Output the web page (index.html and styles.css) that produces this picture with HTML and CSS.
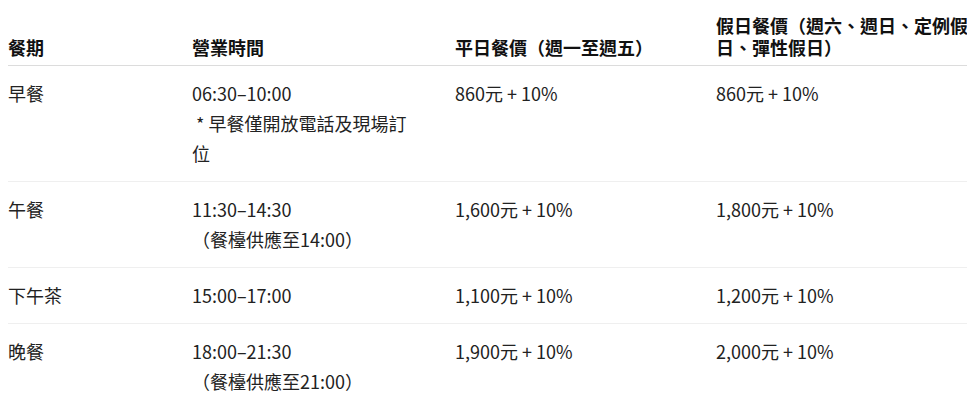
FILE: index.html
```html
<!DOCTYPE html>
<html lang="zh-Hant">
<head>
<meta charset="utf-8">
<title>餐期與價格</title>
<link rel="stylesheet" href="styles.css">
</head>
<body>
<table class="price-table">
  <colgroup>
    <col class="col-meal">
    <col class="col-hours">
    <col class="col-weekday">
    <col class="col-holiday">
  </colgroup>
  <thead>
    <tr>
      <th>餐期</th>
      <th>營業時間</th>
      <th>平日餐價（週一至週五）</th>
      <th class="nowrap">假日餐價（週六、週日、定例假<br>日、彈性假日）</th>
    </tr>
  </thead>
  <tbody>
    <tr>
      <td>早餐</td>
      <td>06:30–10:00<br><span class="note">&nbsp;* 早餐僅開放電話及現場訂<br>位</span></td>
      <td>860元 + 10%</td>
      <td>860元 + 10%</td>
    </tr>
    <tr>
      <td>午餐</td>
      <td>11:30–14:30<br>（餐檯供應至14:00）</td>
      <td>1,600元 + 10%</td>
      <td>1,800元 + 10%</td>
    </tr>
    <tr>
      <td>下午茶</td>
      <td>15:00–17:00</td>
      <td>1,100元 + 10%</td>
      <td>1,200元 + 10%</td>
    </tr>
    <tr>
      <td>晚餐</td>
      <td>18:00–21:30<br>（餐檯供應至21:00）</td>
      <td>1,900元 + 10%</td>
      <td>2,000元 + 10%</td>
    </tr>
  </tbody>
</table>
</body>
</html>
```
FILE: styles.css
```css
html, body {
  background: #ffffff;
}
body {
  margin: 8px;
  font-family: "Noto Sans CJK TC", "Noto Sans", sans-serif;
  font-size: 18px;
  color: #222222;
}
.price-table {
  width: 960px;
  table-layout: fixed;
  border-collapse: collapse;
  border-spacing: 0;
}
.col-meal { width: 184px; }
.col-hours { width: 263px; }
.col-weekday { width: 261px; }
.col-holiday { width: 252px; }

.price-table th {
  text-align: left;
  vertical-align: bottom;
  font-weight: 700;
  color: #111111;
  line-height: 22px;
  padding: 6px 0 7px;
  border-bottom: 1px solid #dcdcdc;
}
.price-table th.nowrap {
  white-space: nowrap;
}
.price-table td {
  text-align: left;
  vertical-align: top;
  line-height: 30px;
  padding: 12px 0 13px;
  border-bottom: 1px solid #efefef;
}
.price-table tbody tr:last-child td {
  border-bottom: none;
}
.note {
  white-space: nowrap;
}
```
